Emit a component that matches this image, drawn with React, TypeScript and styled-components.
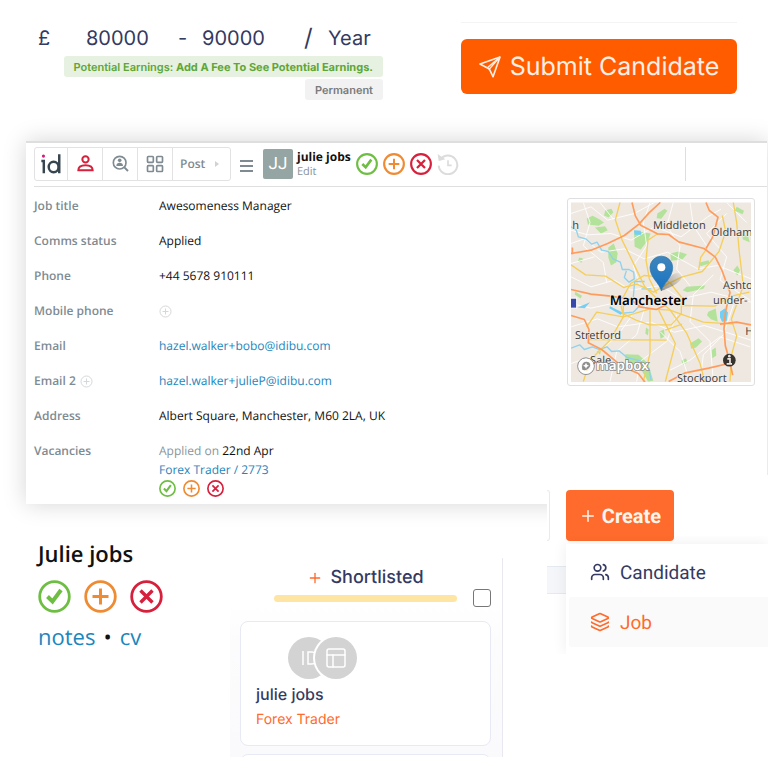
import React from "react";
import styled, { createGlobalStyle } from "styled-components";
import { Layers, LayoutGrid, PanelsTopLeft, Plus, Users } from "lucide-react";

const GlobalStyle = createGlobalStyle`
  *, *::before, *::after { box-sizing: border-box; }
  body {
    margin: 0;
    background: #fff;
    color: #111;
    font-family: "Open Sans", "Noto Sans", sans-serif;
    text-rendering: geometricPrecision;
  }
  button, input, select { font: inherit; color: inherit; text-rendering: inherit; }
  button { cursor: pointer; }
  svg { display: block; flex: none; }
`;

const GREEN = "#6fbe44";
const ORANGE = "#ee8b33";
const RED = "#d6203c";
const NAVY = "#343a61";
const BRAND = "#ff6b2c";

const Page = styled.main`
  overflow: hidden;
`;

/* Salary and submit */

const TopBar = styled.header`
  display: grid;
  grid-template-columns: 1fr 1fr;
  height: 141px;
`;

const Salary = styled.section`
  display: flex;
  flex-direction: column;
  align-items: flex-end;
  gap: 2px;
  padding-top: 22px;
  font-family: Inter, sans-serif;
`;

const SalaryRow = styled.div`
  display: grid;
  grid-template-columns: 48px 92px 24px 102px 24px 56px;
  align-items: center;
  height: 32px;
  color: ${NAVY};
  font-size: 20px;
  line-height: 32px;
`;

const Amount = styled.input`
  width: 100%;
  padding: 0;
  border: 0;
  background: none;
  outline: 0;
`;

const Slash = styled.span`
  font-size: 24px;
`;

const Period = styled.select`
  appearance: none;
  padding: 0;
  border: 0;
  background: none;
  outline: 0;
`;

const Tag = styled.span<{ $tone: "green" | "grey" }>`
  height: 21px;
  padding: 0 10px;
  border-radius: 3px;
  font-size: 11px;
  font-weight: 600;
  line-height: 22px;
  white-space: nowrap;
  margin-right: 1px;
  color: ${(p) => (p.$tone === "green" ? "#5fa637" : "#7b7b7b")};
  background: ${(p) => (p.$tone === "green" ? "#e6f1e1" : "#f2f2f2")};
  b { font-weight: 700; }
`;

const SubmitArea = styled.section`
  display: flex;
  flex-direction: column;
  gap: 16px;
  padding: 22px 31px 0 77px;
`;

const Rule = styled.hr`
  width: 100%;
  height: 1px;
  margin: 0;
  border: 0;
  background: #f4f4f4;
`;

const SubmitButton = styled.button`
  display: flex;
  align-items: center;
  justify-content: center;
  gap: 9px;
  height: 55px;
  padding: 0;
  border: 0;
  border-radius: 6px;
  background: #ff5c00;
  color: #ffefe6;
  font-family: Inter, sans-serif;
  font-size: 25px;
  white-space: nowrap;
`;

/* Candidate record */

const Record = styled.section`
  margin-left: 26px;
  margin-right: 1px;
  height: 363px;
  border-top: 2px solid #dedede;
  background: #fff;
  box-shadow: 0 0 22px rgba(0, 0, 0, 0.17);
`;

const RecordBar = styled.div`
  display: flex;
  align-items: center;
  height: 44px;
  margin-left: 8px;
  padding-bottom: 2px;
  border-bottom: 1px solid #dfdfdf;
`;

const ToolGroup = styled.nav`
  display: flex;
  height: 34px;
  border: 1px solid #e2e2e2;
  border-radius: 3px;
`;

const Tool = styled.button<{ $wide?: boolean }>`
  display: flex;
  align-items: center;
  justify-content: ${(p) => (p.$wide ? "space-between" : "center")};
  width: ${(p) => (p.$wide ? 57 : 35)}px;
  padding: ${(p) => (p.$wide ? "0 11px 0 7px" : "0")};
  border: 0;
  border-right: 1px solid #e2e2e2;
  background: none;
  color: #7f8b92;
  font-size: 12px;
  font-weight: 600;
  &:first-child { width: 33px; }
  &:last-child { border-right: 0; }
`;

const IconButton = styled.button`
  display: flex;
  padding: 0;
  border: 0;
  background: none;
`;

const MenuButton = styled(IconButton)`
  margin: 4px 10px 0 9px;
`;

const Avatar = styled.div`
  width: 30px;
  height: 30px;
  border-radius: 2px;
  background: #94a5a3;
  color: #fff;
  font-family: Roboto, sans-serif;
  font-size: 17px;
  line-height: 30px;
  text-align: center;
`;

const Identity = styled.div`
  display: flex;
  flex-direction: column;
  margin: 0 5px 0 4px;
  font-size: 11px;
  line-height: 15px;
  color: #87939a;
`;

const IdentityName = styled.strong`
  color: #111;
  font-size: 12px;
  font-weight: 700;
`;

const Statuses = styled.div<{ $gap: number }>`
  display: flex;
  align-items: center;
  gap: ${(p) => p.$gap}px;
`;

const BarDivider = styled.span`
  width: 1px;
  height: 34px;
  margin: 0 81px 0 auto;
  background: #dedede;
`;

const RecordBody = styled.div`
  display: flex;
  align-items: flex-start;
  justify-content: space-between;
  padding: 0 12px 0 8px;
`;

const Fields = styled.dl`
  display: grid;
  grid-template-columns: 125px auto;
  grid-auto-rows: minmax(35px, auto);
  margin: 10px 0 0;
  font-size: 12px;
  line-height: 18px;
`;

const Label = styled.dt`
  display: flex;
  align-items: center;
  align-self: start;
  gap: 4px;
  color: #7f8b92;
  font-weight: 600;
`;

const Value = styled.dd`
  margin: 0;
`;

const AddButton = styled(IconButton)`
  height: 18px;
  align-items: center;
`;

const Muted = styled.span`
  color: #8a959b;
`;

const Link = styled.a`
  color: #1c86bd;
  text-decoration: none;
`;

const VacancyValue = styled(Value)`
  display: flex;
  flex-direction: column;
  gap: 1px;
`;

const MapFrame = styled.figure`
  width: 188px;
  height: 188px;
  margin: 11px 0 0;
  padding: 3px;
  border: 1px solid #dfdfe1;
  border-radius: 3px;
  flex: none;
`;

/* Lower area */

const Lower = styled.div`
  display: grid;
  grid-template-columns: 230fr 273fr 44fr 221fr;
  align-items: start;
`;

const Mini = styled.section`
  display: flex;
  flex-direction: column;
  gap: 12px;
  padding: 36px 0 0 38px;
  font-size: 22px;
  line-height: 28px;
`;

const MiniName = styled.h2`
  margin: 0;
  font-size: 22px;
  font-weight: 600;
  line-height: 28px;
`;

const MiniLinks = styled.div`
  display: flex;
  gap: 8px;
  margin-top: -2px;
`;

const Board = styled.section`
  height: 199px;
  margin-top: 54px;
  padding: 4px 11px 0 10px;
  overflow: hidden;
  border-right: 1px solid #e8e9f0;
  background: linear-gradient(#fff 45px, #fcfcfd 85px, #fafafc);
  font-family: Inter, sans-serif;
`;

const BoardHead = styled.div`
  display: grid;
  grid-template-columns: 1fr 18px;
  column-gap: 16px;
  align-items: end;
  padding-left: 34px;
  height: 46px;
`;

const BoardTitle = styled.h2`
  display: flex;
  align-items: center;
  justify-content: center;
  gap: 7px;
  margin: 0 0 3px;
  color: ${NAVY};
  font-size: 18px;
  font-weight: 500;
  line-height: 28px;
`;

const Stage = styled.div`
  padding-bottom: 6px;
`;

const StageBar = styled.div`
  height: 7px;
  border-radius: 4px;
  background: #ffe5a3;
`;

const Pick = styled.input`
  appearance: none;
  width: 18px;
  height: 18px;
  margin: 0 0 1px;
  border: 1px solid #777;
  border-radius: 3px;
  background: #fff;
`;

const BoardCard = styled.article`
  height: 125px;
  margin-top: 13px;
  padding: 15px 15px;
  border: 1px solid #e7eaf4;
  border-radius: 8px;
  background: #fff;
  color: ${NAVY};
  font-size: 16px;
  font-weight: 500;
  line-height: 26px;
  & + & { margin-top: 8px; }
`;

const Badges = styled.div`
  display: flex;
  margin: 0 0 2px 32px;
`;

const Badge = styled.span`
  display: flex;
  align-items: center;
  justify-content: center;
  width: 42px;
  height: 42px;
  border-radius: 50%;
  background: #d3d3d3;
  color: #fff;
  & + & {
    margin-left: -15px;
    box-shadow: 0 0 0 2px #fff;
  }
`;

const BoardRole = styled.p`
  margin: 0;
  color: ${BRAND};
  font-size: 14px;
  font-weight: 400;
`;

const CreateArea = styled.section`
  display: grid;
  grid-template-columns: 19px 1fr;
  grid-template-rows: 15px 51px 3px 110px;
  position: relative;
  margin-top: -29px;
  background: #fff;
  font-family: Roboto, sans-serif;
`;

const EdgeField = styled.span`
  grid-area: 2 / 1;
  width: 3px;
  border: 1px solid #e8eaf2;
  border-left: 0;
  border-radius: 0 5px 5px 0;
`;

const EdgeBand = styled.span`
  grid-area: 4 / 1;
  height: 28px;
  margin-top: 22px;
  border: solid #e5e9f0;
  border-width: 1px 0;
  background: #f4f6f9;
`;

const CreateButton = styled.button`
  grid-area: 2 / 2;
  display: flex;
  align-items: center;
  justify-content: center;
  gap: 5px;
  width: 108px;
  padding: 0;
  border: 0;
  border-radius: 4px;
  background: ${BRAND};
  color: #fff5ef;
  font-size: 20px;
  font-weight: 700;
`;

const Menu = styled.div`
  grid-area: 4 / 2;
  display: flex;
  flex-direction: column;
  padding: 3px 0 0 3px;
  box-shadow: 0 0 14px rgba(0, 0, 0, 0.07);
  clip-path: inset(-8px 0 0 -14px);
  background: #fff;
`;

const MenuItem = styled.button<{ $active?: boolean }>`
  display: flex;
  align-items: center;
  gap: 10px;
  height: 50px;
  padding: 0 0 0 21px;
  border: 0;
  border-radius: 3px 0 0 3px;
  background: ${(p) => (p.$active ? "#fafafa" : "#fff")};
  color: ${(p) => (p.$active ? BRAND : NAVY)};
  font-size: 19px;
`;

type Status = "accept" | "add" | "reject";

const statusShape: Record<Status, { color: string; label: string; d: string; width: number }> = {
  accept: { color: GREEN, label: "Accept", d: "M9.500 16.500l5 5 8.500-11.500", width: 4 },
  add: { color: ORANGE, label: "Add", d: "M16.500 8.500v16M8.500 16.500h16", width: 3 },
  reject: { color: RED, label: "Reject", d: "M10.500 10.500l12 12M22.500 10.500l-12 12", width: 3.400 },
};

function StatusButton({ kind, size }: { kind: Status; size: number }) {
  const s = statusShape[kind];
  return (
    <IconButton aria-label={s.label}>
      <svg width={size} height={size} viewBox="0 0 33 33" fill="none" stroke={s.color}>
        <circle cx="16.5" cy="16.5" r="14.8" strokeWidth={size > 30 ? 2.8 : 3.2} />
        <path d={s.d} strokeWidth={s.width} />
      </svg>
    </IconButton>
  );
}

function StatusSet({ size, gap, children }: { size: number; gap: number; children?: React.ReactNode }) {
  return (
    <Statuses $gap={gap}>
      <StatusButton kind="accept" size={size} />
      <StatusButton kind="add" size={size} />
      <StatusButton kind="reject" size={size} />
      {children}
    </Statuses>
  );
}

function FaintPlus({ label }: { label: string }) {
  return (
    <AddButton aria-label={label}>
      <svg width="13" height="13" viewBox="0 0 13 13" fill="none" stroke="#d5d8da">
        <circle cx="6.5" cy="6.5" r="5.5" />
        <path d="M6.500 3.500v6M3.500 6.500h6" />
      </svg>
    </AddButton>
  );
}

function IdLogo() {
  return (
    <svg width="20" height="20" viewBox="0 0 57 57" fill="none" stroke="#36454f" strokeWidth="7">
      <path d="M1 20h7v35M52 1v54" />
      <ellipse cx="36" cy="37" rx="14" ry="15" />
      <circle cx="7" cy="6" r="4.500" fill="#d61c73" stroke="none" />
    </svg>
  );
}

function PersonIcon() {
  return (
    <svg width="17" height="17" viewBox="0 0 51 51" fill="none" stroke={RED} strokeWidth="6">
      <circle cx="25.5" cy="13" r="9.500" />
      <path d="M4 46c0-10 9-15 21.500-15S47 36 47 46z" />
    </svg>
  );
}

function SearchPersonIcon() {
  return (
    <svg width="17" height="17" viewBox="0 0 51 51" fill="none" stroke="#7f8b92" strokeWidth="5">
      <circle cx="23" cy="23" r="19" />
      <path d="M37 37l11 11" strokeWidth="6" />
      <circle cx="23" cy="16" r="5.500" fill="#7f8b92" stroke="none" />
      <path d="M13 33c0-7 4-10 10-10s10 3 10 10z" fill="#7f8b92" stroke="none" />
    </svg>
  );
}

function HistoryIcon() {
  return (
    <svg width="22" height="22" viewBox="0 0 66 66" fill="none" stroke="#dcdcdc" strokeWidth="6">
      <path d="M9 21a28 28 0 1 1-4 17" />
      <path d="M2 3l3 21 20-5z" fill="#dcdcdc" stroke="none" />
      <path d="M33 22v15h11" strokeWidth="5" />
    </svg>
  );
}

function SendIcon() {
  return (
    <svg width="22" height="22" viewBox="0 0 66 66" fill="none" stroke="#ffefe6" strokeWidth="5" strokeLinejoin="round">
      <path d="M3 24L63 3 42 62 31 39z" />
      <path d="M63 3L25 35M63 3L31 39v4" strokeWidth="4" />
    </svg>
  );
}

const parks = [
  "M140 265l18-8 20 10 14 10-16 10-32-4z",
  "M196 240l18-4 6 10-14 16-14-6z",
  "M165 292l30-4 8 12-20 10z",
  "M282 302l50 8-8 20-22 28-18-8z",
  "M352 250l22-14 8 6-18 24-14-2z",
  "M391 370l24-6 26 8-14 16-34 4z",
  "M440 470l56-4-6 10-48 10-14-6z",
  "M205 352l16-12 12 30-4 26-16 10-8-24z",
  "M450 640l26-16 10 10-18 18-14 4z",
  "M505 545l22-10 6 40-20-8-12-12z",
  "M106 485l20 12-4 8-18-12z",
  "M590 230l22 12-4 10-24-10z",
  "M256 672l40 2 28 26 16 52-16 2-22-38-46-18z",
  "M358 604l14-6 2 20-12 8z",
  "M515 660l12-8 2 24-12 8z",
  "M605 310l20 10 4 16-20-8z",
  "M118 382l12 4-6 12-10-6z",
  "M476 398l30-8 2 10-26 8z",
  "M580 420l12-14 8 14-8 16z",
  "M170 664l14-6-4 16z",
  "M424 692l14-8 4 12-12 8z",
  "M318 592l8 6-2 18-8-6z",
];

const minorRoads =
  "M93 250l60-20 50 40 80-20 60-33M93 300l50 14 70-4 60 20 70-40 80 30 80-60 40-23M130 217l20 60-20 70 60 50 10 60M93 340l40-14 50 40 70-10 60 30 70-20 90 50 60-10 100 40M93 440l60 30 70-20 50 30 90-14 60 40 90-20 120 30M93 520l60 14 90-20M93 590l80-24 60 24 100-14 70 30 90-20 140 44M93 700l70-24 70-60 50-70M210 754l20-90 60-50 30-100M290 754l10-60 80-60 30-80M450 754l-30-90-60-60M480 754l10-80 60-60 30-90M520 754l-10-120-60-60 10-80 60-60M400 217l-20 70 40 60-10 70 40 50M450 217l10 70 40 60M560 250l-60 60 60 70-20 70 90 60M330 217l-20 60 10 70-40 60 20 60M180 217l40 50M93 400l70-20M560 217l60 60M630 650l-90-30-90 70-60 30";

const mapLabels: Array<[number, number, string]> = [
  [97, 297, "h"],
  [339, 295, "Middleton"],
  [513, 318, "Oldham"],
  [549, 477, "Ashton"],
  [519, 520, "under-"],
  [105, 625, "Stretford"],
  [150, 700, "Sale"],
  [411, 754, "Stockport"],
  [616, 614, "H"],
];

function AreaMap() {
  return (
    <svg width="180" height="180" viewBox="93 217 540 537" role="img" aria-label="Map of Manchester" fill="none">
      <defs>
        <linearGradient id="pin" x1="0" y1="0" x2="0" y2="1">
          <stop offset="0" stopColor="#3f86bb" />
          <stop offset="1" stopColor="#1673c4" />
        </linearGradient>
        <linearGradient id="pinShade" x1="0" y1="1" x2="1" y2="0">
          <stop offset="0" stopColor="#000" stopOpacity="0.4" />
          <stop offset="1" stopColor="#000" stopOpacity="0.03" />
        </linearGradient>
      </defs>
      <rect x="93" y="217" width="540" height="540" fill="#eee8e1" />
      <g fill="#b3e29a">
        {parks.map((d) => (
          <path key={d} d={d} />
        ))}
      </g>
      <path d={minorRoads} stroke="#fff" strokeWidth="3" strokeOpacity="0.85" strokeLinejoin="round" />
      <g stroke="#8ed2ef" strokeWidth="4" strokeLinejoin="round">
        <path d="M93 290l16 10 6 20 22 6 18 16 16-6 14 24 20 4 14 22 22 10 6 22 20 0 14 8 2 20-16 10-14-14 6-20" />
        <path d="M93 654l26-10 14 14 24-8 20 8 24-8 14 14 22-2 24 20 40 10 26 24 6 34M280 500l4-46 30 0M240 550l40-4 20-20M304 476l30 0" />
      </g>
      <g fill="#72cff5">
        <path d="M282 300l20 2 2 12-20 0zM540 545l14-10 10 12-4 26-14 2-6-14zM210 528l36 18-4 8-34-20zM112 532l38-16-16 18z" />
      </g>
      <g stroke="#f5cf5b" strokeWidth="4" strokeLinejoin="round">
        <path d="M240 217l-14 52 20 60 44 90 24 50 30 30 46 40 50 70 40 90 14 55" />
        <path d="M93 404l44 30 60 4 54 34 40-10 50 24 40-24 46-22 60-16 50-60 20-60-10-48" />
        <path d="M354 310l-30 20-6 60 10 56 22 44" />
        <path d="M250 560l0-60 22-40 40-24 50 4 30 20 32 40 0 50-30 34-66 0-40-14-40-20-10-50" />
        <path d="M140 590l30-44 80 14 80-24 60 4 100 36 90 6" />
        <path d="M424 526l100 2 50-30 54-12M330 540l0 130-20 84M250 560l-40 70-60 60-20 64M140 628l240 2M356 540l50 100-30 114M376 600l50-18M580 217l10 60 8 90 12 100-36 100 16 50-16 60-4 77" />
        <path d="M476 420l6-38 18-26" />
      </g>
      <g stroke="#ff9c5c" strokeWidth="5" strokeLinejoin="round">
        <path d="M93 370l60-10 50-20 50-24 44-34 30-34 34-31M276 217l10 40 16 28 50 26 34 2 30 22 76 20 34 26 20 40 24 66-14 60-4 50 4 50 14 50 8 38" />
        <path d="M93 478l60 14 60 6 60 10 26 22 50 8 30-14M93 556l40 12 14 30-2 40 40 20 60 50 50 22 20 26M498 217l10 24 26 20-16 60-20 34M540 582l50-6 43 8M566 700l-60 14-70 14-50 26M97 352v20" />
      </g>
      <path d="M364 482c14-42 44-62 58-50 12 14-14 34-58 50z" fill="url(#pinShade)" />
      <g fontFamily='"Noto Sans", sans-serif' fontSize="33" fill="#44443f" stroke="#f3eee9" strokeWidth="4" paintOrder="stroke">
        {mapLabels.map(([x, y, text]) => (
          <text key={text} x={x} y={y}>
            {text}
          </text>
        ))}
        <text x="209" y="525" fontSize="40" fontWeight="600" fill="#000">
          Manchester
        </text>
      </g>
      <rect x="90" y="504" width="20" height="30" fill="#3949ab" stroke="#fff" strokeWidth="3" />
      <path d="M364 482c-6-24-34-40-34-70a34 34 0 0 1 68 0c0 30-28 46-34 70z" fill="url(#pin)" stroke="#2b72a8" strokeWidth="2" />
      <circle cx="364" cy="411" r="12" fill="#fff" />
      <circle cx="138" cy="708" r="25" fill="#ffffffaa" stroke="#8d8d8d" strokeWidth="3" />
      <circle cx="138" cy="708" r="19" stroke="#fff" strokeWidth="7" />
      <path d="M127 719c-3-16 2-24 12-24s15 9 9 17-13 9-21 7z" fill="#8d8d8d" />
      <path d="M138 698l3 6 6 3-6 3-3 6-3-6-6-3 6-3z" fill="#fff" />
      <text
        x="168"
        y="718"
        fontFamily='"Noto Sans", sans-serif'
        fontSize="40"
        fontWeight="600"
        fill="#fff"
        stroke="#888"
        strokeWidth="5"
        paintOrder="stroke"
      >
        mapbox
      </text>
      <circle cx="568" cy="690" r="19" fill="#37332e" />
      <path d="M562 686h8v14M560 701h16" stroke="#eee8e1" strokeWidth="5" />
      <circle cx="568" cy="678" r="4" fill="#eee8e1" />
    </svg>
  );
}

export default function App() {
  return (
    <>
      <GlobalStyle />
      <Page>
        <TopBar>
          <Salary>
            <SalaryRow>
              <span>£</span>
              <Amount aria-label="Minimum salary" defaultValue="80000" />
              <span>-</span>
              <Amount aria-label="Maximum salary" defaultValue="90000" />
              <Slash>/</Slash>
              <Period aria-label="Pay period" defaultValue="Year">
                <option>Year</option>
              </Period>
            </SalaryRow>
            <Tag $tone="green">
              Potential Earnings: <b>Add A Fee To See Potential Earnings.</b>
            </Tag>
            <Tag $tone="grey">Permanent</Tag>
          </Salary>
          <SubmitArea>
            <Rule />
            <SubmitButton>
              <SendIcon />
              Submit Candidate
            </SubmitButton>
          </SubmitArea>
        </TopBar>

        <Record>
          <RecordBar>
            <ToolGroup aria-label="Main">
              <Tool aria-label="Home">
                <IdLogo />
              </Tool>
              <Tool aria-label="Candidates">
                <PersonIcon />
              </Tool>
              <Tool aria-label="Search candidates">
                <SearchPersonIcon />
              </Tool>
              <Tool aria-label="Dashboard">
                <LayoutGrid size={20} strokeWidth={2} />
              </Tool>
              <Tool $wide>
                Post
                <svg width="4" height="6" viewBox="0 0 4 6" fill="#cfd3d6">
                  <path d="M0 0l4 3-4 3z" />
                </svg>
              </Tool>
            </ToolGroup>
            <MenuButton aria-label="Menu">
              <svg width="13" height="12" viewBox="0 0 13 12" stroke="#7f8b92" strokeWidth="2">
                <path d="M0 1h13M0 6h13M0 11h13" />
              </svg>
            </MenuButton>
            <Avatar>JJ</Avatar>
            <Identity>
              <IdentityName>julie jobs</IdentityName>
              <span>Edit</span>
            </Identity>
            <StatusSet size={22} gap={5}>
              <IconButton aria-label="History">
                <HistoryIcon />
              </IconButton>
            </StatusSet>
            <BarDivider />
          </RecordBar>
          <RecordBody>
            <Fields>
              <Label>Job title</Label>
              <Value>Awesomeness Manager</Value>
              <Label>Comms status</Label>
              <Value>Applied</Value>
              <Label>Phone</Label>
              <Value>+44 5678 910111</Value>
              <Label>Mobile phone</Label>
              <Value>
                <FaintPlus label="Add mobile phone" />
              </Value>
              <Label>Email</Label>
              <Value>
                <Link href="#email">hazel.walker+bobo@idibu.com</Link>
              </Value>
              <Label>
                Email 2 <FaintPlus label="Add email" />
              </Label>
              <Value>
                <Link href="#email-2">hazel.walker+julieP@idibu.com</Link>
              </Value>
              <Label>Address</Label>
              <Value>Albert Square, Manchester, M60 2LA, UK</Value>
              <Label>Vacancies</Label>
              <VacancyValue>
                <span>
                  <Muted>Applied on</Muted> 22nd Apr
                </span>
                <Link href="#vacancy">Forex Trader / 2773</Link>
                <StatusSet size={17} gap={7} />
              </VacancyValue>
            </Fields>
            <MapFrame>
              <AreaMap />
            </MapFrame>
          </RecordBody>
        </Record>

        <Lower>
          <Mini>
            <MiniName>Julie jobs</MiniName>
            <StatusSet size={33} gap={13} />
            <MiniLinks>
              <Link href="#notes">notes</Link>
              <span>•</span>
              <Link href="#cv">cv</Link>
            </MiniLinks>
          </Mini>

          <Board>
            <BoardHead>
              <Stage>
                <BoardTitle>
                  <Plus size={16} color={BRAND} />
                  Shortlisted
                </BoardTitle>
                <StageBar />
              </Stage>
              <Pick type="checkbox" aria-label="Select all shortlisted" />
            </BoardHead>
            <BoardCard>
              <Badges>
                <Badge>
                  <svg width="16" height="14" viewBox="0 0 16 14" fill="none" stroke="#fff" strokeWidth="1.500">
                    <path d="M2 0v14M7 1h4c6 0 6 12 0 12H7z" />
                  </svg>
                </Badge>
                <Badge>
                  <PanelsTopLeft size={24} strokeWidth={1.5} />
                </Badge>
              </Badges>
              <div>julie jobs</div>
              <BoardRole>Forex Trader</BoardRole>
            </BoardCard>
            <BoardCard />
          </Board>

          <span />

          <CreateArea>
            <EdgeField />
            <EdgeBand />
            <CreateButton>
              <Plus size={18} strokeWidth={2} />
              Create
            </CreateButton>
            <Menu>
              <MenuItem>
                <Users size={20} strokeWidth={2} />
                Candidate
              </MenuItem>
              <MenuItem $active>
                <Layers size={20} />
                Job
              </MenuItem>
            </Menu>
          </CreateArea>
        </Lower>
      </Page>
    </>
  );
}
